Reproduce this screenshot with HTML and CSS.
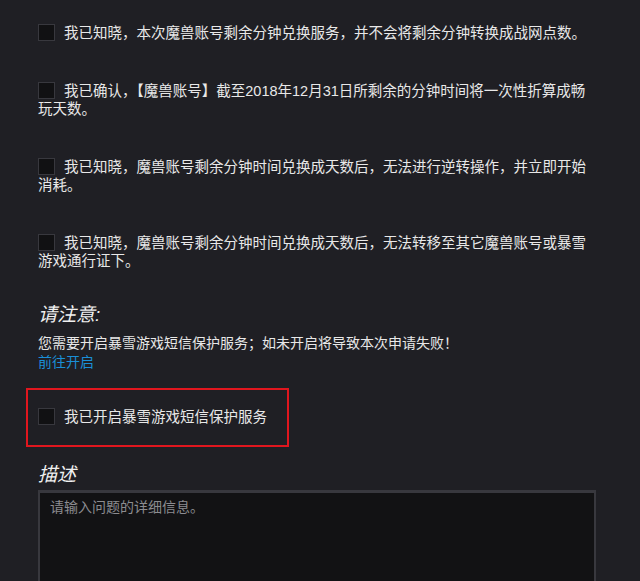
FILE: index.html
```html
<!DOCTYPE html>
<html lang="zh-CN">
<head>
    <meta charset="UTF-8">
    <meta name="viewport" content="width=device-width, initial-scale=1.0">
    <title>魔兽账号剩余分钟兑换</title>
    <link rel="stylesheet" href="styles.css">
</head>
<body>
<div class="form">
    <label class="agree"><span class="box"></span>我已知晓，本次魔兽账号剩余分钟兑换服务，并不会将剩余分钟转换成战网点数。</label>
    <label class="agree"><span class="box"></span>我已确认，【魔兽账号】截至2018年12月31日所剩余的分钟时间将一次性折算成畅玩天数。</label>
    <label class="agree"><span class="box"></span>我已知晓，魔兽账号剩余分钟时间兑换成天数后，无法进行逆转操作，并立即开始<br>消耗。</label>
    <label class="agree"><span class="box"></span>我已知晓，魔兽账号剩余分钟时间兑换成天数后，无法转移至其它魔兽账号或暴雪<br>游戏通行证下。</label>

    <h3 class="title note-title">请注意:</h3>
    <p class="note">您需要开启暴雪游戏短信保护服务；如未开启将导致本次申请失败！<br><a href="#">前往开启</a></p>

    <div class="sms">
        <label class="agree"><span class="box"></span>我已开启暴雪游戏短信保护服务</label>
    </div>

    <h3 class="title desc-title">描述</h3>
    <textarea class="desc" placeholder="请输入问题的详细信息。"></textarea>
</div>
</body>
</html>
```

FILE: styles.css
```css
body {
    margin: 0;
    background-color: #1f1f24;
    color: #e8e8e8;
    font-family: "Liberation Sans", "Noto Sans CJK SC", sans-serif;
}
.form {
    width: 558px;
    padding: 24px 0 0 38px;
}
.agree {
    display: block;
    font-size: 14.5px;
    line-height: 18px;
    margin-bottom: 40px;
}
.box {
    display: inline-block;
    width: 15px;
    height: 15px;
    margin-right: 9px;
    vertical-align: -3px;
    background-color: #111113;
    border: 1px solid #38383e;
}
.title {
    margin: 0;
    font-size: 19px;
    font-style: italic;
    font-weight: normal;
    line-height: 24px;
    color: #f0f0f0;
}
.note-title {
    margin-top: -7px;
}
.note {
    margin: 7px 0 16px;
    font-size: 14px;
    line-height: 19px;
}
.note a {
    color: #1a8fd8;
    text-decoration: none;
}
.sms {
    width: 229px;
    margin-left: -12px;
    padding: 18px 20px 19px 10px;
    border: 2px solid #e0161e;
}
.sms .agree {
    margin-bottom: 0;
}
.desc-title {
    margin-top: 16px;
}
.desc {
    display: block;
    box-sizing: border-box;
    width: 558px;
    height: 120px;
    margin-top: 3px;
    padding: 5px 10px;
    background-color: #121214;
    border: 2px solid #38383e;
    border-top-width: 3px;
    color: #e8e8e8;
    font-family: inherit;
    font-size: 14px;
    line-height: 18px;
    resize: none;
}
.desc::placeholder {
    color: #8c8c90;
}
```
